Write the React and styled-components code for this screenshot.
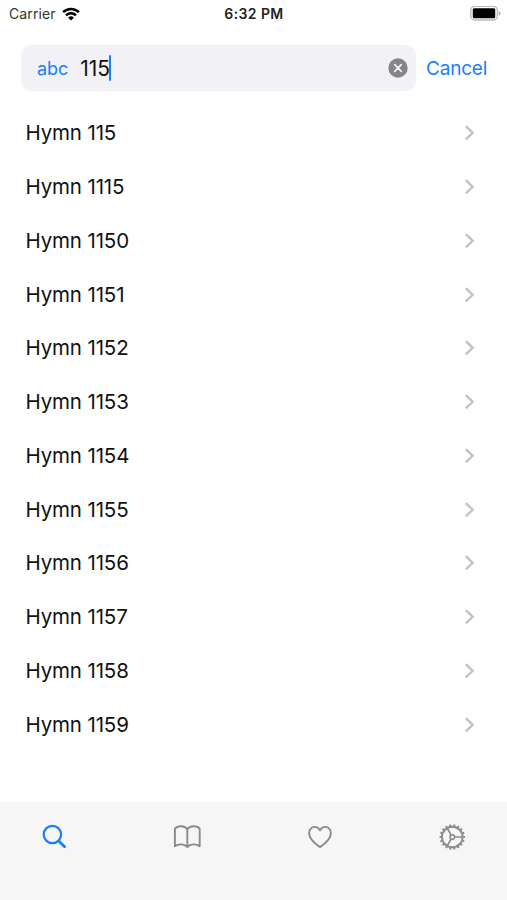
import React from "react";
import styled, { createGlobalStyle } from "styled-components";

const GlobalStyle = createGlobalStyle`
    * {
        box-sizing: border-box;
    }
    body {
        margin: 0;
        background: #fff;
        font-family: Inter, "Liberation Sans", sans-serif;
        color: #111;
    }
`;

const Screen = styled.div`
    display: flex;
    flex-direction: column;
    width: 507px;
    height: 900px;
    overflow: hidden;
    background: #fff;
    svg {
        display: block;
        flex: none;
    }
`;

const StatusBar = styled.header`
    display: grid;
    grid-template-columns: 1fr auto 1fr;
    align-items: center;
    height: 27px;
    padding: 0 6px 0 9px;
    line-height: 18px;
`;

const Carrier = styled.div`
    display: flex;
    align-items: center;
    gap: 6px;
    font-size: 14px;
    letter-spacing: 0.1px;
    color: #333;
`;

const Clock = styled.div`
    margin-right: 2px;
    font-size: 14px;
    font-weight: 600;
    letter-spacing: 0.4px;
    color: #222;
`;

const Battery = styled.div`
    display: flex;
    justify-content: flex-end;
`;

const SearchRow = styled.div`
    display: flex;
    align-items: center;
    gap: 10px;
    height: 46px;
    margin-top: 18px;
    padding: 0 20px 0 21px;
`;

const SearchField = styled.div`
    display: flex;
    flex: none;
    align-items: center;
    width: 395px;
    height: 46px;
    padding: 0 8px 0 16px;
    border-radius: 11px;
    background: #f1f1f6;
`;

const TextButton = styled.button`
    padding: 2px 0 0;
    border: 0;
    background: none;
    font-family: inherit;
    font-size: ${(props) => props.$size || 19}px;
    letter-spacing: ${(props) => props.$spacing || 0}px;
    line-height: 26px;
    color: #1a80f8;
    white-space: nowrap;
`;

const Query = styled.span`
    margin-left: 12px;
    padding-top: 2px;
    font-size: 21px;
    letter-spacing: 0;
    line-height: 26px;
`;

const Caret = styled.span`
    width: 2px;
    height: 26px;
    margin-left: -1px;
    border-radius: 1px;
    background: #1a80f8;
`;

const ClearButton = styled.button`
    margin-left: auto;
    padding: 0;
    border: 0;
    background: none;
`;

const Results = styled.ul`
    flex: 1;
    margin: 0;
    padding: 15.5px 32.5px 0 25.5px;
    list-style: none;
`;

const Result = styled.li`
    display: flex;
    align-items: center;
    justify-content: space-between;
    height: 53.75px;
    font-size: 20.5px;
    letter-spacing: -0.15px;
    line-height: 26px;
`;

const TabBar = styled.nav`
    display: grid;
    grid-template-columns: repeat(4, 132.6px);
    justify-content: center;
    height: 98px;
    padding-top: 19px;
    background: #f6f6f6;
`;

const Tab = styled.div`
    display: flex;
    justify-content: center;
    color: ${(props) => (props.$active ? "#1a80f8" : "#8b8b8b")};
`;

const WifiIcon = () => (
    <svg width="18" height="14" viewBox="0 0 18 14" fill="none" stroke="#000">
        <path d="M1.1 5.2a11.4 11.4 0 0 1 15.8 0" strokeWidth="2.5" />
        <path d="M4 8.3a7.2 7.2 0 0 1 10 0" strokeWidth="2.4" />
        <path d="M9 13.5 6.1 10.7a4.2 4.2 0 0 1 5.8 0Z" fill="#000" stroke="none" />
    </svg>
);

const BatteryIcon = () => (
    <svg width="31" height="16" viewBox="0 0 31 16">
        <rect x="0.8" y="0.4" width="26.6" height="13.6" rx="4" fill="#fff" stroke="#bababa" strokeWidth="1.4" />
        <rect x="2.8" y="2.2" width="22.4" height="10" rx="1.5" fill="#000" />
        <path d="M28.9 4.9c2.2 1 2.2 3.7 0 4.7Z" fill="#aaa" />
    </svg>
);

const ClearIcon = () => (
    <svg width="20" height="20" viewBox="0 0 20 20">
        <circle cx="10" cy="10" r="9.7" fill="#858589" />
        <path d="m6.7 6.7 6.6 6.6m0-6.6-6.6 6.6" stroke="#f1f1f6" strokeWidth="1.8" strokeLinecap="round" />
    </svg>
);

const Chevron = () => (
    <svg width="11" height="16" viewBox="0 0 11 16" fill="none">
        <path d="m1.8 1.2 6.9 6.6-6.9 6.6" stroke="#c2c2c4" strokeWidth="2.3" />
    </svg>
);

const TabIcon = ({ children }) => (
    <svg
        width="32"
        height="32"
        viewBox="0 0 32 32"
        fill="none"
        stroke="currentColor"
        strokeWidth="1.9"
        strokeLinecap="round"
        strokeLinejoin="round"
    >
        {children}
    </svg>
);

const SearchIcon = () => (
    <TabIcon>
        <circle cx="13.4" cy="13.5" r="8.7" strokeWidth="2.2" />
        <path d="m20 20.2 5.6 5.6" strokeWidth="2.8" />
    </TabIcon>
);

const BookIcon = () => (
    <TabIcon>
        <path d="M16.3 8.2C13.9 4.5 6.6 4.3 3.9 7.8v17.4c3.4-2.6 9.6-2.4 12.4.8 2.8-3.2 9-3.4 12.4-.8V7.8C26 4.3 18.7 4.5 16.3 8.2ZM16.3 8.2V26" />
    </TabIcon>
);

const HeartIcon = () => (
    <TabIcon>
        <path d="M16 26.1C11.5 23 5.1 18.2 5.1 12.2 5.1 8.6 7.6 5.9 10.7 5.9 13.1 5.9 14.9 7.3 16 9.3 17.1 7.3 18.9 5.9 21.3 5.9 24.4 5.9 26.9 8.6 26.9 12.2 26.9 18.2 20.5 23 16 26.1Z" />
    </TabIcon>
);

const teeth = Array.from({ length: 18 }, (_, i) => i * 20);

const GearIcon = () => (
    <TabIcon>
        <circle cx="16.3" cy="16" r="10.3" />
        {teeth.map((angle) => (
            <path key={angle} d="M27.3 16h1.7" strokeWidth="2" strokeLinecap="butt" transform={`rotate(${angle} 16.3 16)`} />
        ))}
        <circle cx="16.3" cy="16" r="2.3" strokeWidth="1.6" />
        {[0, 120, 240].map((angle) => (
            <path key={angle} d="M18.8 16h7" strokeWidth="1.7" transform={`rotate(${angle} 16.3 16)`} />
        ))}
    </TabIcon>
);

const hymns = [115, 1115, 1150, 1151, 1152, 1153, 1154, 1155, 1156, 1157, 1158, 1159];

const App = () => {
    return (
        <Screen>
            <GlobalStyle />
            <StatusBar>
                <Carrier>
                    Carrier
                    <WifiIcon />
                </Carrier>
                <Clock>6:32 PM</Clock>
                <Battery>
                    <BatteryIcon />
                </Battery>
            </StatusBar>
            <SearchRow>
                <SearchField>
                    <TextButton $size={18} $spacing={-0.1}>
                        abc
                    </TextButton>
                    <Query>115</Query>
                    <Caret />
                    <ClearButton aria-label="Clear">
                        <ClearIcon />
                    </ClearButton>
                </SearchField>
                <TextButton $spacing={-0.2}>Cancel</TextButton>
            </SearchRow>
            <Results>
                {hymns.map((number) => (
                    <Result key={number}>
                        Hymn {number}
                        <Chevron />
                    </Result>
                ))}
            </Results>
            <TabBar>
                <Tab $active>
                    <SearchIcon />
                </Tab>
                <Tab>
                    <BookIcon />
                </Tab>
                <Tab>
                    <HeartIcon />
                </Tab>
                <Tab>
                    <GearIcon />
                </Tab>
            </TabBar>
        </Screen>
    );
};

export default App;
